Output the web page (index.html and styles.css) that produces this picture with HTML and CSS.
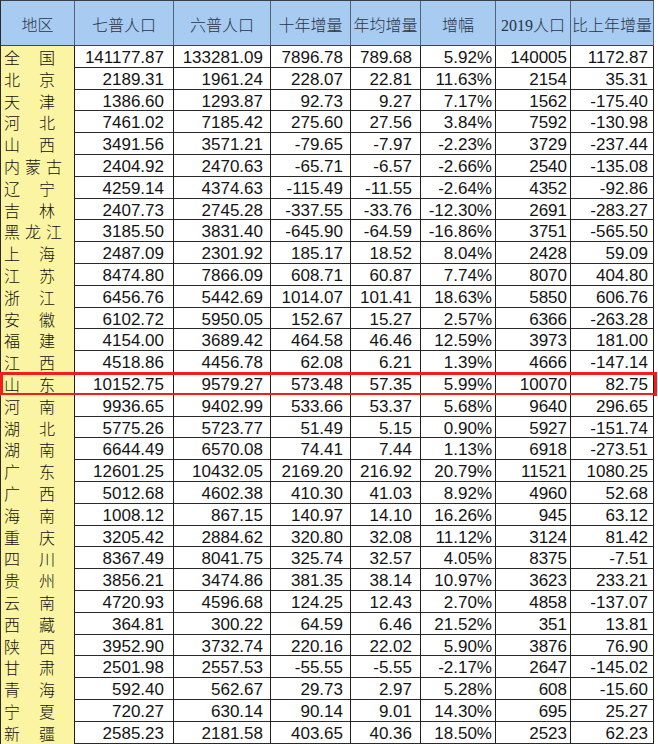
FILE: index.html
```html
<!DOCTYPE html>
<html lang="zh-CN">
<head>
<meta charset="utf-8">
<title>人口数据</title>
<link rel="stylesheet" href="styles.css">
</head>
<body>
<div class="sheet" id="sheet">
  <div class="row head">
    <div class="c c1">地区</div>
    <div class="c c2">七普人口</div>
    <div class="c c3">六普人口</div>
    <div class="c c4">十年增量</div>
    <div class="c c5">年均增量</div>
    <div class="c c6">增幅</div>
    <div class="c c7">2019人口</div>
    <div class="c c8">比上年增量</div>
  </div>
</div>
<script src="app.js"></script>
</body>
</html>
```
FILE: app.js
```js
const data = [
["全国","141177.87","133281.09","7896.78","789.68","5.92%","140005","1172.87"],
["北京","2189.31","1961.24","228.07","22.81","11.63%","2154","35.31"],
["天津","1386.60","1293.87","92.73","9.27","7.17%","1562","-175.40"],
["河北","7461.02","7185.42","275.60","27.56","3.84%","7592","-130.98"],
["山西","3491.56","3571.21","-79.65","-7.97","-2.23%","3729","-237.44"],
["内蒙古","2404.92","2470.63","-65.71","-6.57","-2.66%","2540","-135.08"],
["辽宁","4259.14","4374.63","-115.49","-11.55","-2.64%","4352","-92.86"],
["吉林","2407.73","2745.28","-337.55","-33.76","-12.30%","2691","-283.27"],
["黑龙江","3185.50","3831.40","-645.90","-64.59","-16.86%","3751","-565.50"],
["上海","2487.09","2301.92","185.17","18.52","8.04%","2428","59.09"],
["江苏","8474.80","7866.09","608.71","60.87","7.74%","8070","404.80"],
["浙江","6456.76","5442.69","1014.07","101.41","18.63%","5850","606.76"],
["安徽","6102.72","5950.05","152.67","15.27","2.57%","6366","-263.28"],
["福建","4154.00","3689.42","464.58","46.46","12.59%","3973","181.00"],
["江西","4518.86","4456.78","62.08","6.21","1.39%","4666","-147.14"],
["山东","10152.75","9579.27","573.48","57.35","5.99%","10070","82.75"],
["河南","9936.65","9402.99","533.66","53.37","5.68%","9640","296.65"],
["湖北","5775.26","5723.77","51.49","5.15","0.90%","5927","-151.74"],
["湖南","6644.49","6570.08","74.41","7.44","1.13%","6918","-273.51"],
["广东","12601.25","10432.05","2169.20","216.92","20.79%","11521","1080.25"],
["广西","5012.68","4602.38","410.30","41.03","8.92%","4960","52.68"],
["海南","1008.12","867.15","140.97","14.10","16.26%","945","63.12"],
["重庆","3205.42","2884.62","320.80","32.08","11.12%","3124","81.42"],
["四川","8367.49","8041.75","325.74","32.57","4.05%","8375","-7.51"],
["贵州","3856.21","3474.86","381.35","38.14","10.97%","3623","233.21"],
["云南","4720.93","4596.68","124.25","12.43","2.70%","4858","-137.07"],
["西藏","364.81","300.22","64.59","6.46","21.52%","351","13.81"],
["陕西","3952.90","3732.74","220.16","22.02","5.90%","3876","76.90"],
["甘肃","2501.98","2557.53","-55.55","-5.55","-2.17%","2647","-145.02"],
["青海","592.40","562.67","29.73","2.97","5.28%","608","-15.60"],
["宁夏","720.27","630.14","90.14","9.01","14.30%","695","25.27"],
["新疆","2585.23","2181.58","403.65","40.36","18.50%","2523","62.23"]
];
const sheet = document.getElementById("sheet");
data.forEach(function (r) {
  const row = document.createElement("div");
  row.className = "row" + (r[0] === "山东" ? " hl" : "");
  const name = document.createElement("div");
  const chars = Array.from(r[0]);
  name.className = "c c1 name" + (chars.length > 2 ? " three" : "");
  chars.forEach(function (ch) {
    const s = document.createElement("span");
    s.textContent = ch;
    name.appendChild(s);
  });
  row.appendChild(name);
  for (let i = 1; i < r.length; i++) {
    const d = document.createElement("div");
    d.className = "c num c" + (i + 1);
    d.textContent = r[i];
    row.appendChild(d);
  }
  sheet.appendChild(row);
});
```
FILE: styles.css
```css
html, body {
  margin: 0;
  padding: 0;
  background: #ffffff;
}
.sheet {
  width: max-content;
  border-top: 1px solid #3a3f4a;
  border-left: 1px solid #2a2a2a;
}
.row {
  display: flex;
  height: 21.8px;
  position: relative;
}
.row.head {
  height: 45px;
}
.c {
  box-sizing: border-box;
  border-right: 1px solid #1e1e1e;
  border-bottom: 1px solid #2a2a2a;
  overflow: hidden;
  white-space: nowrap;
  flex: none;
}
.c1 { width: 74px; }
.c2 { width: 99px; }
.c3 { width: 97px; }
.c4 { width: 80px; }
.c5 { width: 70px; }
.c6 { width: 75px; }
.c7 { width: 75px; }
.c8 { width: 83px; }

.head .c {
  background: #a8cbf1;
  border-right-color: #52627e;
  border-bottom-color: #3c4658;
  display: flex;
  align-items: center;
  justify-content: center;
  font-family: "Liberation Serif", "Noto Sans CJK SC", serif;
  font-size: 16px;
  font-weight: 300;
  color: #2b3448;
  padding-top: 2px;
}
.head .c8 {
  justify-content: flex-start;
  padding-left: 1px;
}

.name {
  background: #fbf5a3;
  border-bottom: none;
  display: flex;
  justify-content: space-between;
  padding: 2px 19px 0 3px;
  font-family: "Noto Sans CJK SC", sans-serif;
  font-size: 16px;
  font-weight: 300;
  line-height: 18px;
  color: #111;
}
.name.three {
  padding-right: 12px;
}

.num {
  font-family: "Liberation Sans", Arial, sans-serif;
  font-size: 17px;
  line-height: 18px;
  padding-top: 3px;
  text-align: right;
  color: #141414;
  background: #ffffff;
}
.num.c2 { padding-right: 9px; }
.num.c3 { padding-right: 7px; }
.num.c4 { padding-right: 7px; }
.num.c5 { padding-right: 8px; }
.num.c6 { padding-right: 3px; }
.num.c7 { padding-right: 3px; }
.num.c8 { padding-right: 5px; }

.row.hl::after {
  content: "";
  position: absolute;
  left: -1px;
  right: -3px;
  top: -1px;
  bottom: -1px;
  border: 3px solid #f41d1b;
  pointer-events: none;
}
```
